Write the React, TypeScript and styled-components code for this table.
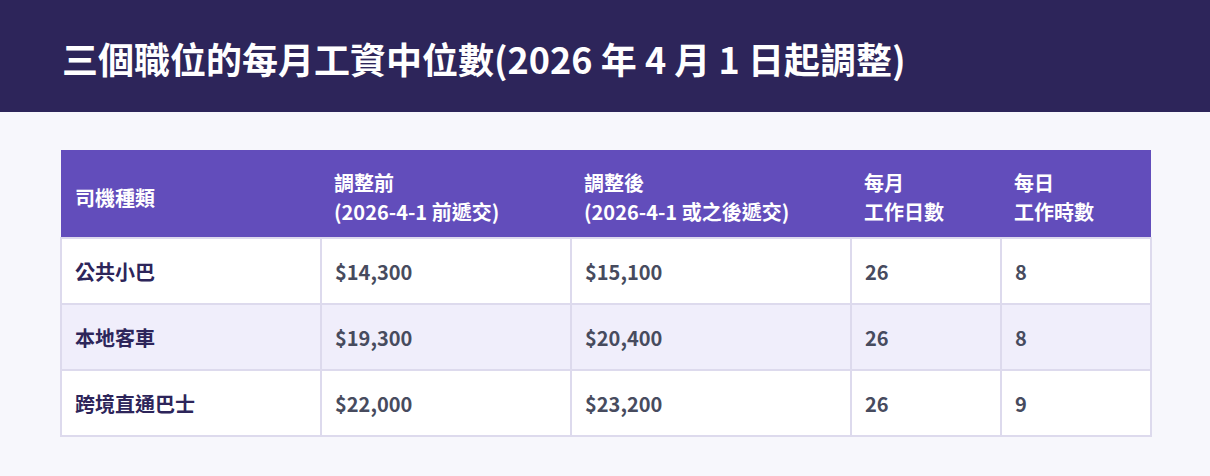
import React from "react";
import styled, { createGlobalStyle } from "styled-components";

const Global = createGlobalStyle`
  html, body { margin: 0; padding: 0; background: #f7f7fc; }
  body { font-family: "Noto Sans CJK TC", "Noto Sans", sans-serif; }
`;

const Page = styled.div`
  width: 1210px;
  min-height: 476px;
  background: #f7f7fc;
`;

const Banner = styled.header`
  height: 112px;
  background: #2d255a;
  display: flex;
  align-items: center;
  padding: 0 62px;
  box-sizing: border-box;
`;

const Title = styled.h1`
  margin: 0;
  color: #ffffff;
  font-size: 36px;
  font-weight: 700;
  line-height: 1;
  padding-top: 4px;
`;

const Content = styled.main`
  padding: 38px 60px 0;
`;

const Table = styled.table`
  width: 1090px;
  border-collapse: collapse;
  table-layout: fixed;
`;

const HeadCell = styled.th`
  background: #624dbb;
  color: #ffffff;
  font-size: 20px;
  font-weight: 700;
  line-height: 29px;
  text-align: left;
  padding: 18px 13px 11px;
  height: 88px;
  box-sizing: border-box;
  vertical-align: middle;
  white-space: nowrap;
  &:first-child {
    padding-left: 14px;
  }
`;

const Row = styled.tr<{ $alt?: boolean }>`
  background: ${(p) => (p.$alt ? "#f0eefb" : "#ffffff")};
`;

const Cell = styled.td<{ $label?: boolean }>`
  border: 2px solid #dddaed;
  padding: 0 13px;
  height: 66px;
  box-sizing: border-box;
  font-size: 20px;
  font-weight: ${(p) => (p.$label ? 700 : 600)};
  color: ${(p) => (p.$label ? "#2d255a" : "#474b5e")};
  vertical-align: middle;
`;

const rows = [
  ["公共小巴", "$14,300", "$15,100", "26", "8"],
  ["本地客車", "$19,300", "$20,400", "26", "8"],
  ["跨境直通巴士", "$22,000", "$23,200", "26", "9"],
];

export default function App() {
  return (
    <Page>
      <Global />
      <Banner>
        <Title>三個職位的每月工資中位數(2026 年 4 月 1 日起調整)</Title>
      </Banner>
      <Content>
        <Table>
          <colgroup>
            <col style={{ width: 260 }} />
            <col style={{ width: 250 }} />
            <col style={{ width: 280 }} />
            <col style={{ width: 150 }} />
            <col style={{ width: 150 }} />
          </colgroup>
          <thead>
            <tr>
              <HeadCell>司機種類</HeadCell>
              <HeadCell>
                調整前
                <br />
                (2026-4-1 前遞交)
              </HeadCell>
              <HeadCell>
                調整後
                <br />
                (2026-4-1 或之後遞交)
              </HeadCell>
              <HeadCell>
                每月
                <br />
                工作日數
              </HeadCell>
              <HeadCell>
                每日
                <br />
                工作時數
              </HeadCell>
            </tr>
          </thead>
          <tbody>
            {rows.map((r, i) => (
              <Row key={r[0]} $alt={i % 2 === 1}>
                {r.map((c, j) => (
                  <Cell key={j} $label={j === 0}>
                    {c}
                  </Cell>
                ))}
              </Row>
            ))}
          </tbody>
        </Table>
      </Content>
    </Page>
  );
}
